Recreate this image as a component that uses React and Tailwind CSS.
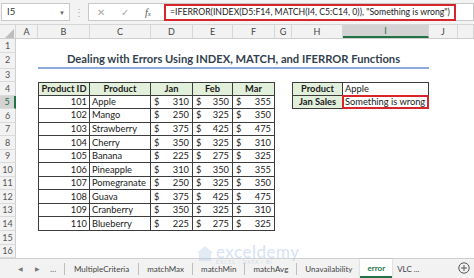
import React from "react";

const W = [
  "w-[16px]", "w-[22px]", "w-[52px]", "w-[61px]", "w-[42px]", "w-[40px]",
  "w-[42px]", "w-[17px]", "w-[51px]", "w-[86px]", "w-[29px]", "w-[16px]",
];
const LETTERS = ["", "A", "B", "C", "D", "E", "F", "G", "H", "I", "J", ""];

const DATA = [
  ["101", "Apple", "310", "350", "355"],
  ["102", "Mango", "250", "325", "350"],
  ["103", "Strawberry", "375", "425", "475"],
  ["104", "Cherry", "350", "325", "310"],
  ["105", "Banana", "225", "275", "325"],
  ["106", "Pineapple", "310", "350", "355"],
  ["107", "Pomegranate", "250", "325", "350"],
  ["108", "Guava", "375", "425", "475"],
  ["109", "Cranberry", "350", "325", "310"],
  ["110", "Blueberry", "225", "275", "325"],
];

function RowHeader({ n, selected }) {
  return (
    <div
      className={
        selected
          ? "w-[16px] shrink-0 h-full flex items-center justify-center bg-[#d3d3d3] text-[#1e6e3f] border-r-2 border-[#217346] border-b border-b-[#dadada] text-[9px]"
          : "w-[16px] shrink-0 h-full flex items-center justify-center bg-[#f2f2f2] text-[#555] border-r border-[#cfcfcf] border-b border-b-[#dadada] text-[9px]"
      }
    >
      {n}
    </div>
  );
}

function Empty({ i }) {
  return <div className={`${W[i]} shrink-0 h-full`} />;
}

function Money({ v }) {
  return (
    <div className="flex justify-between items-center h-full px-[3px] border-r border-b border-[#3c3c3c]">
      <span>$</span>
      <span>{v}</span>
    </div>
  );
}

export default function App() {
  return (
    <div className="w-[474px] h-[278px] overflow-hidden bg-white relative [font-family:Lato,'Open_Sans',sans-serif] text-[#1a1a1a]">
      {/* Formula bar */}
      <div className="h-[25px] bg-[#f3f3f3] flex items-center border-b border-[#d6d6d6]">
        <div className="ml-[1px] w-[69px] h-[18px] bg-white border border-[#c8c8c8] flex items-center justify-between pl-[5px] pr-[4px] text-[9.5px] text-[#333]">
          <span>I5</span>
          <span className="text-[6px] text-[#666]">▼</span>
        </div>
        <div className="w-[18px] flex justify-center text-[#aaa] text-[10px] leading-none">⋮</div>
        <div className="flex-1 h-[18px] bg-white border border-[#c8c8c8] flex items-center">
          <div className="w-[70px] flex items-center justify-around text-[#a9a9a9] text-[10px] shrink-0">
            <span>✕</span>
            <span>✓</span>
            <span className="italic text-[#555] [font-family:'Liberation_Serif',serif] text-[10px]">f<span className="text-[7px]">x</span></span>
          </div>
          <div className="ml-[5px] h-[17px] w-[292px] border-2 border-[#d8252c] flex items-center px-[4px] text-[8.7px] text-[#222] whitespace-nowrap overflow-hidden">
            =IFERROR(INDEX(D5:F14, MATCH(I4, C5:C14, 0)), "Something is wrong")
          </div>
        </div>
      </div>

      {/* Column headers */}
      <div className="h-[14px] flex bg-[#f2f2f2] border-b border-[#cfcfcf] text-[9px] text-[#444]">
        {LETTERS.map((l, i) => (
          <div
            key={i}
            className={`${W[i]} shrink-0 h-full flex items-center justify-center border-r border-[#d6d6d6] ${
              l === "I" ? "bg-[#d3d3d3] border-b-2 border-b-[#217346] text-[#1e6e3f]" : ""
            }`}
          >
            {i === 0 ? (
              <svg width="9" height="9" viewBox="0 0 9 9" className="ml-[4px] mt-[3px]">
                <path d="M9 0 L9 9 L0 9 Z" fill="#bdbdbd" />
              </svg>
            ) : (
              l
            )}
          </div>
        ))}
      </div>

      {/* Row 1 */}
      <div className="h-[13.5px] flex">
        <RowHeader n={1} />
      </div>
      {/* Row 2 - title */}
      <div className="h-[16px] flex">
        <RowHeader n={2} />
        <Empty i={1} />
        <div className="w-[391px] shrink-0 h-full flex items-center justify-center border-b-2 border-[#8eaadb] text-[11.2px] font-bold text-[#333f4f] whitespace-nowrap">
          Dealing with Errors Using INDEX, MATCH, and IFERROR Functions
        </div>
      </div>
      {/* Row 3 */}
      <div className="h-[13.5px] flex">
        <RowHeader n={3} />
      </div>

      {/* Row 4 headers */}
      <div className="h-[13.55px] flex text-[9.3px] whitespace-nowrap">
        <RowHeader n={4} />
        <Empty i={1} />
        {["Product ID", "Product", "Jan", "Feb", "Mar"].map((h, k) => (
          <div
            key={h}
            className={`${W[k + 2]} shrink-0 h-full flex items-center justify-center font-bold bg-[#e2efda] border-t border-r border-b border-[#3c3c3c] ${
              k === 0 ? "border-l" : ""
            }`}
          >
            {h}
          </div>
        ))}
        <Empty i={7} />
        <div className="w-[51px] shrink-0 h-full flex items-center justify-center font-bold bg-[#e2efda] border border-[#3c3c3c]">
          Product
        </div>
        <div className="w-[86px] shrink-0 h-full flex items-center px-[2px] border-t border-r border-b border-[#3c3c3c]">
          Apple
        </div>
      </div>

      {/* Data rows 5-14 */}
      {DATA.map((r, idx) => (
        <div key={r[0]} className="h-[13.55px] flex text-[9.3px] whitespace-nowrap">
          <RowHeader n={idx + 5} selected={idx === 0} />
          <Empty i={1} />
          <div className="w-[52px] shrink-0 h-full flex items-center justify-end pr-[2px] border-l border-r border-b border-[#3c3c3c]">
            {r[0]}
          </div>
          <div className="w-[61px] shrink-0 h-full flex items-center pl-[2px] border-r border-b border-[#3c3c3c]">
            {r[1]}
          </div>
          <div className="w-[42px] shrink-0 h-full">
            <Money v={r[2]} />
          </div>
          <div className="w-[40px] shrink-0 h-full">
            <Money v={r[3]} />
          </div>
          <div className="w-[42px] shrink-0 h-full">
            <Money v={r[4]} />
          </div>
          {idx === 0 && (
            <>
              <Empty i={7} />
              <div className="w-[51px] shrink-0 h-full flex items-center justify-center font-bold bg-[#e2efda] border-l border-r border-b border-[#3c3c3c]">
                Jan Sales
              </div>
              <div className="w-[86px] shrink-0 h-full relative flex items-center px-[2px] border-r border-b border-[#3c3c3c]">
                Something is wrong
                <div className="absolute -left-[1px] -top-[1px] -right-[1px] -bottom-[1px] border-2 border-[#d8252c]" />
              </div>
            </>
          )}
        </div>
      ))}

      {/* Rows 15-16 */}
      <div className="h-[13.55px] flex">
        <RowHeader n={15} />
      </div>
      <div className="h-[13.55px] flex">
        <RowHeader n={16} />
      </div>

      {/* Sheet tabs */}
      <div className="absolute left-0 bottom-0 w-[474px] h-[20px] bg-[#f2f2f2] border-t border-[#d0d0d0] flex items-center text-[8px] text-[#444] whitespace-nowrap">
        <div className="w-[64px] shrink-0 flex items-center text-[#777]">
          <span className="ml-[18px] text-[6px]">◀</span>
          <span className="ml-[12px] text-[6px]">▶</span>
          <span className="ml-[10px] text-[9px]">...</span>
        </div>
        <div className="h-[12px] shrink-0 border-l border-[#bdbdbd]" />
        <div className="px-[9px] shrink-0">MultipleCriteria</div>
        <div className="h-[12px] shrink-0 border-l border-[#bdbdbd]" />
        <div className="px-[8px] shrink-0">matchMax</div>
        <div className="h-[12px] shrink-0 border-l border-[#bdbdbd]" />
        <div className="px-[8px] shrink-0">matchMin</div>
        <div className="h-[12px] shrink-0 border-l border-[#bdbdbd]" />
        <div className="px-[8px] shrink-0">matchAvg</div>
        <div className="h-[12px] shrink-0 border-l border-[#bdbdbd]" />
        <div className="px-[8px] shrink-0">Unavailability</div>
        <div className="h-full shrink-0 bg-white px-[7px] flex items-center font-bold text-[#217346] border-b-2 border-[#217346] shadow-[0_0_2px_rgba(0,0,0,0.2)]">
          error
        </div>
        <div className="pl-[5px] shrink-0">VLC ...</div>
        <svg
          width="12"
          height="12"
          viewBox="0 0 12 12"
          className="absolute right-[4px] top-[3px]"
        >
          <circle cx="6" cy="6" r="5.2" fill="#f2f2f2" stroke="#555" strokeWidth="1" />
          <path d="M6 3 V9 M3 6 H9" stroke="#555" strokeWidth="1" />
        </svg>
      </div>

      {/* Watermark */}
      <div className="absolute left-[196px] top-[243px] flex items-center opacity-40 pointer-events-none">
        <svg width="18" height="18" viewBox="0 0 18 18">
          <path d="M9 1 L17 8 L15 8 L15 16 L3 16 L3 8 L1 8 Z" fill="#b7cbe6" />
        </svg>
        <div className="flex flex-col leading-none ml-[2px]">
          <span className="text-[17px] text-[#9ab8e2] tracking-[0.5px]">exceldemy</span>
          <span className="text-[5px] text-[#9ab8e2] tracking-[1px]">EXCEL · DATA · BI</span>
        </div>
      </div>
    </div>
  );
}
